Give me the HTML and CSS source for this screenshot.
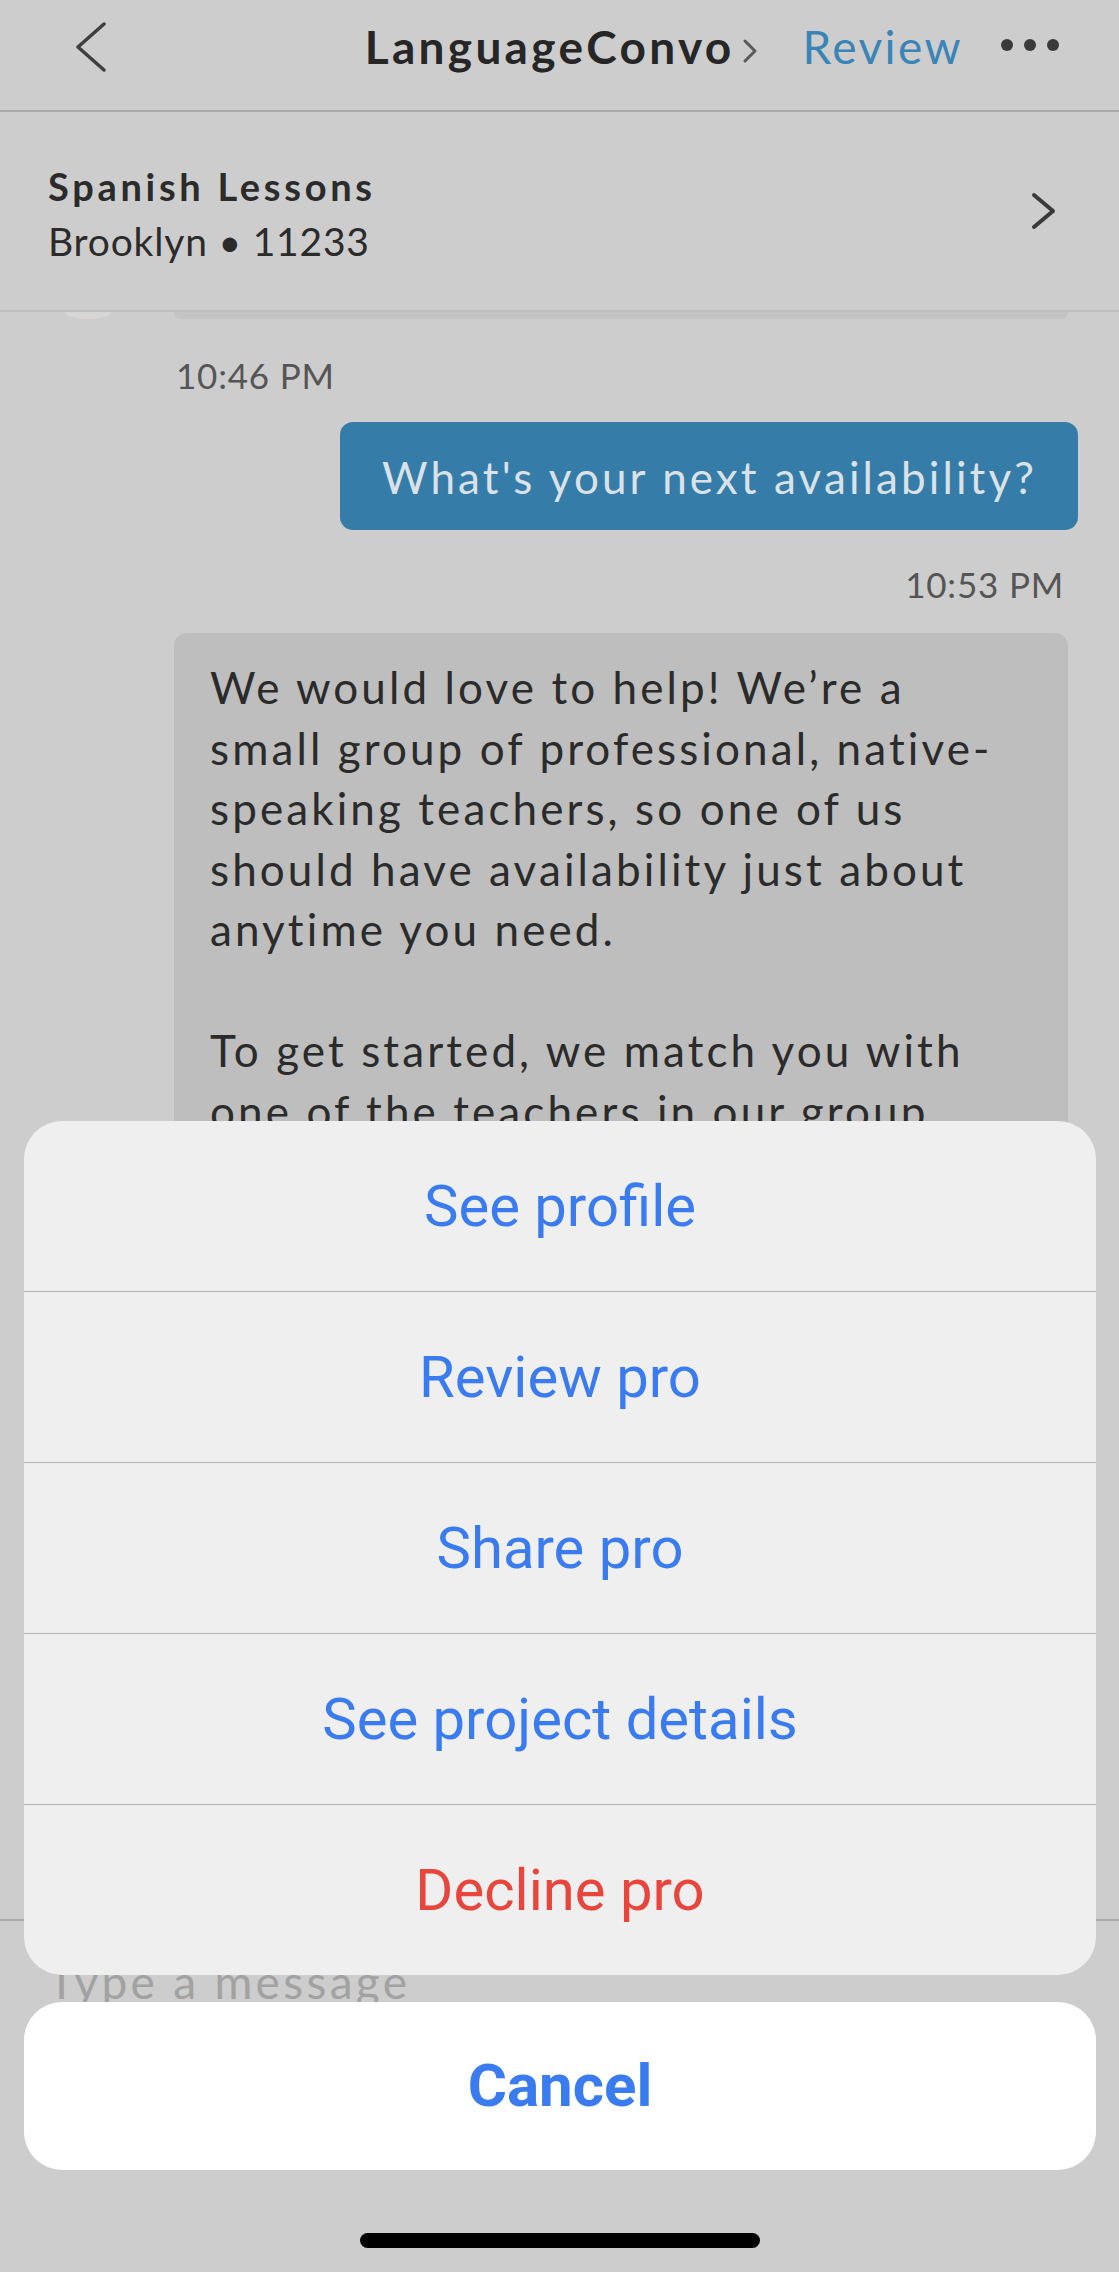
FILE: index.html
```html
<!DOCTYPE html>
<html lang="en">
	<head>
		<meta charset="UTF-8" />
		<meta name="viewport" content="width=device-width, initial-scale=1.0" />
		<title>LanguageConvo</title>
		<link rel="stylesheet" href="styles.css">
	</head>
	<body>
		<div class="screen">
			<header class="nav">
				<span class="nav-back">
					<svg width="32" height="50" viewBox="0 0 32 50">
						<polyline points="29,2 3,25 29,48" fill="none" stroke="#3f3f3f" stroke-width="3.5" stroke-linecap="round" stroke-linejoin="round" />
					</svg>
				</span>
				<div class="nav-title">
					<span>LanguageConvo</span>
					<svg class="nav-title-arrow" width="18" height="26" viewBox="0 0 18 26">
						<polyline points="4,3 14,13 4,23" fill="none" stroke="#5a5a5a" stroke-width="3" stroke-linecap="round" stroke-linejoin="round" />
					</svg>
				</div>
				<span class="nav-review">Review</span>
				<span class="nav-more"><i></i><i></i><i></i></span>
			</header>

			<section class="project">
				<div class="project-info">
					<div class="project-name">Spanish Lessons</div>
					<div class="project-place">Brooklyn • 11233</div>
				</div>
				<svg width="28" height="38" viewBox="0 0 28 38">
					<polyline points="4,3 23,19 4,35" fill="none" stroke="#3a3a3a" stroke-width="4" stroke-linecap="round" stroke-linejoin="round" />
				</svg>
			</section>

			<main class="thread">
				<div class="prev-row">
					<span class="avatar-tail"></span>
					<span class="bubble-tail"></span>
				</div>
				<div class="time time-in">10:46 PM</div>
				<div class="bubble bubble-out">What's your next availability?</div>
				<div class="time time-out">10:53 PM</div>
				<div class="bubble bubble-in">
					<p>We would love to help! We’re a small group of professional, native-speaking teachers, so one of us should have availability just about anytime you need.</p>
					<p>To get started, we match you with one of the teachers in our group</p>
				</div>
			</main>

			<footer class="composer">
				<span class="composer-input">Type a message</span>
			</footer>

			<div class="action-sheet">
				<div class="sheet-group">
					<div class="sheet-item">See profile</div>
					<div class="sheet-item">Review pro</div>
					<div class="sheet-item">Share pro</div>
					<div class="sheet-item">See project details</div>
					<div class="sheet-item danger">Decline pro</div>
				</div>
				<div class="sheet-cancel">Cancel</div>
			</div>

			<div class="home-bar"></div>
		</div>
	</body>
</html>
```

FILE: styles.css
```css
body {
	margin: 0;
	font-family: Lato, "Noto Sans", sans-serif;
	background-color: #cdcdcd;
}

.screen {
	position: relative;
	display: flex;
	flex-direction: column;
	width: 1119px;
	height: 2272px;
	overflow: hidden;
	background-color: #cdcdcd;
}

/* top navigation */
.nav {
	display: flex;
	align-items: center;
	flex: 0 0 auto;
	box-sizing: border-box;
	height: 112px;
	padding: 0 60px 16px 75px;
	border-bottom: 2px solid #a9a9a9;
}

.nav-back {
	display: flex;
	margin-right: auto;
}

.nav-title {
	display: flex;
	align-items: center;
	font-weight: 700;
	font-size: 46px;
	line-height: 1;
	letter-spacing: 3.3px;
	color: #262626;
}

.nav-title-arrow {
	margin: 8px 0 0 6px;
}

.nav-review {
	margin-left: 44px;
	margin-right: 38px;
	font-size: 46px;
	line-height: 1;
	letter-spacing: 2.4px;
	color: #3a84b6;
}

.nav-more {
	display: flex;
	gap: 11px;
	margin-bottom: 4px;
}

.nav-more i {
	width: 12px;
	height: 12px;
	border-radius: 50%;
	background-color: #3a3a3a;
}

/* project summary */
.project {
	display: flex;
	align-items: center;
	justify-content: space-between;
	flex: 0 0 auto;
	box-sizing: border-box;
	height: 200px;
	padding: 0 61px 0 48px;
	border-bottom: 2px solid #bfbfbf;
	color: #2b2b2b;
}

.project-info {
	margin-top: 5px;
}

.project-name {
	font-weight: 700;
	font-size: 38px;
	line-height: 55px;
	letter-spacing: 3.7px;
}

.project-place {
	font-size: 39px;
	line-height: 55px;
	letter-spacing: 0.8px;
}

/* messages */
.thread {
	display: flex;
	flex-direction: column;
	flex: 1 1 auto;
	min-height: 0;
	overflow: hidden;
}

.prev-row {
	display: flex;
	height: 7px;
}

.avatar-tail {
	width: 46px;
	height: 7px;
	margin-left: 65px;
	border-radius: 0 0 23px 23px / 0 0 7px 7px;
	background-color: #d8d5d5;
}

.bubble-tail {
	width: 894px;
	margin-left: 63px;
	border-radius: 0 0 12px 12px;
	background-color: #c4c4c4;
}

.time {
	font-size: 35px;
	line-height: 42px;
	letter-spacing: 0.8px;
	color: #555;
}

.time-in {
	margin: 35px 0 0 176px;
}

.time-out {
	align-self: flex-end;
	margin: 33px 55px 0 0;
}

.bubble {
	box-sizing: border-box;
	border-radius: 13px;
	font-size: 44px;
	letter-spacing: 3.1px;
}

.bubble-out {
	align-self: flex-end;
	margin: 26px 41px 0 0;
	padding: 29px 41px 27px 42px;
	line-height: 52px;
	color: #dae2e8;
	background-color: #367ca8;
}

.bubble-in {
	width: 894px;
	margin: 28px 0 0 174px;
	padding: 24px 46px 24px 36px;
	line-height: 60.5px;
	color: #2b2b2b;
	background-color: #bdbebd;
}

.bubble-in p {
	margin: 0 0 60.5px;
}

/* compose bar */
.composer {
	flex: 0 0 auto;
	box-sizing: border-box;
	height: 353px;
	padding: 34px 48px 0;
	border-top: 2px solid #ababab;
}

.composer-input {
	font-size: 46px;
	line-height: 53px;
	letter-spacing: 3.3px;
	color: #a2a2a2;
}

/* action sheet */
.action-sheet {
	position: absolute;
	left: 24px;
	bottom: 102px;
	display: flex;
	flex-direction: column;
	gap: 27px;
	width: 1072px;
	font-family: Roboto, "Liberation Sans", sans-serif;
	text-align: center;
}

.sheet-group {
	overflow: hidden;
	border-radius: 38px;
	background-color: #efeff0;
}

.sheet-item {
	height: 170px;
	font-size: 58px;
	line-height: 170px;
	color: #3a7cf0;
}

.sheet-item + .sheet-item {
	border-top: 1px solid #b4b4b4;
}

.sheet-item.danger {
	color: #e8453c;
}

.sheet-cancel {
	height: 168px;
	border-radius: 38px;
	font-weight: 700;
	font-size: 60px;
	line-height: 168px;
	color: #3a7cf0;
	background-color: #fff;
}

.home-bar {
	position: absolute;
	left: 360px;
	bottom: 24px;
	width: 400px;
	height: 15px;
	border-radius: 8px;
	background-color: #000;
}
```
